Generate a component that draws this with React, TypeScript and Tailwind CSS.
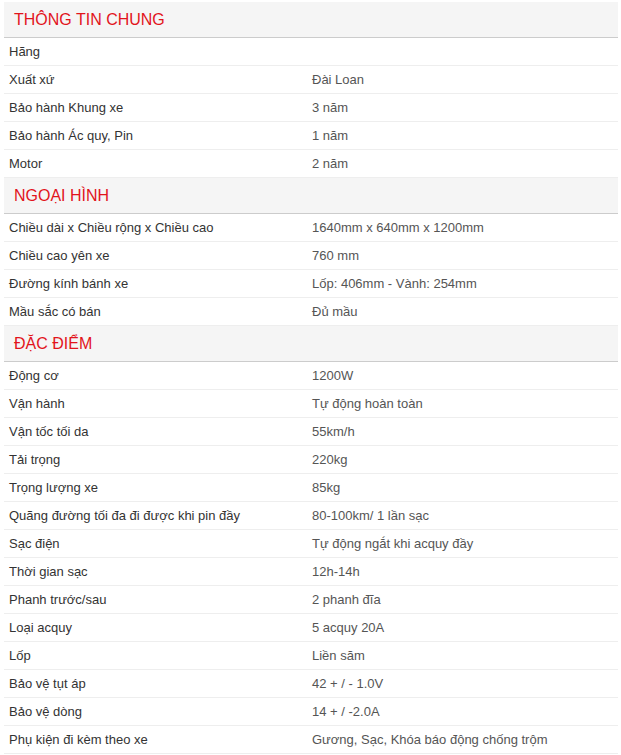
const sections: { title: string; rows: [string, string][] }[] = [
  {
    title: 'THÔNG TIN CHUNG',
    rows: [
      ['Hãng', ''],
      ['Xuất xứ', 'Đài Loan'],
      ['Bảo hành Khung xe', '3 năm'],
      ['Bảo hành Ác quy, Pin', '1 năm'],
      ['Motor', '2 năm'],
    ],
  },
  {
    title: 'NGOẠI HÌNH',
    rows: [
      ['Chiều dài x Chiều rộng x Chiều cao', '1640mm x 640mm x 1200mm'],
      ['Chiều cao yên xe', '760 mm'],
      ['Đường kính bánh xe', 'Lốp: 406mm - Vành: 254mm'],
      ['Mầu sắc có bán', 'Đủ mầu'],
    ],
  },
  {
    title: 'ĐẶC ĐIỂM',
    rows: [
      ['Động cơ', '1200W'],
      ['Vận hành', 'Tự động hoàn toàn'],
      ['Vận tốc tối da', '55km/h'],
      ['Tải trọng', '220kg'],
      ['Trọng lượng xe', '85kg'],
      ['Quãng đường tối đa đi được khi pin đầy', '80-100km/ 1 lần sạc'],
      ['Sạc điện', 'Tự động ngắt khi acquy đầy'],
      ['Thời gian sạc', '12h-14h'],
      ['Phanh trước/sau', '2 phanh đĩa'],
      ['Loại acquy', '5 acquy 20A'],
      ['Lốp', 'Liền săm'],
      ['Bảo vệ tụt áp', '42 + / - 1.0V'],
      ['Bảo vệ dòng', '14 + / -2.0A'],
      ['Phụ kiện đi kèm theo xe', 'Gương, Sạc, Khóa báo động chống trộm'],
    ],
  },
];

export default function App() {
  return (
    <div className="bg-white pt-[2px] pl-[4px] font-['Liberation_Sans',Arial,sans-serif]">
      <div className="w-[614px]">
        {sections.map((s) => (
          <div key={s.title}>
            {/* Section header */}
            <div className="h-[36px] bg-[#f5f5f5] border-b border-[#cccccc] pl-[10px] flex items-center text-[16px] text-[#e2141c]">
              {s.title}
            </div>
            {s.rows.map(([label, value]) => (
              <div
                key={label}
                className="grid grid-cols-[303px_1fr] h-[28px] items-center text-[13px] border-b border-[#eeeeee]"
              >
                <span className="pl-[5px] text-[#333333]">{label}</span>
                <span className="pl-[5px] text-[#555555]">{value}</span>
              </div>
            ))}
          </div>
        ))}
      </div>
    </div>
  );
}
